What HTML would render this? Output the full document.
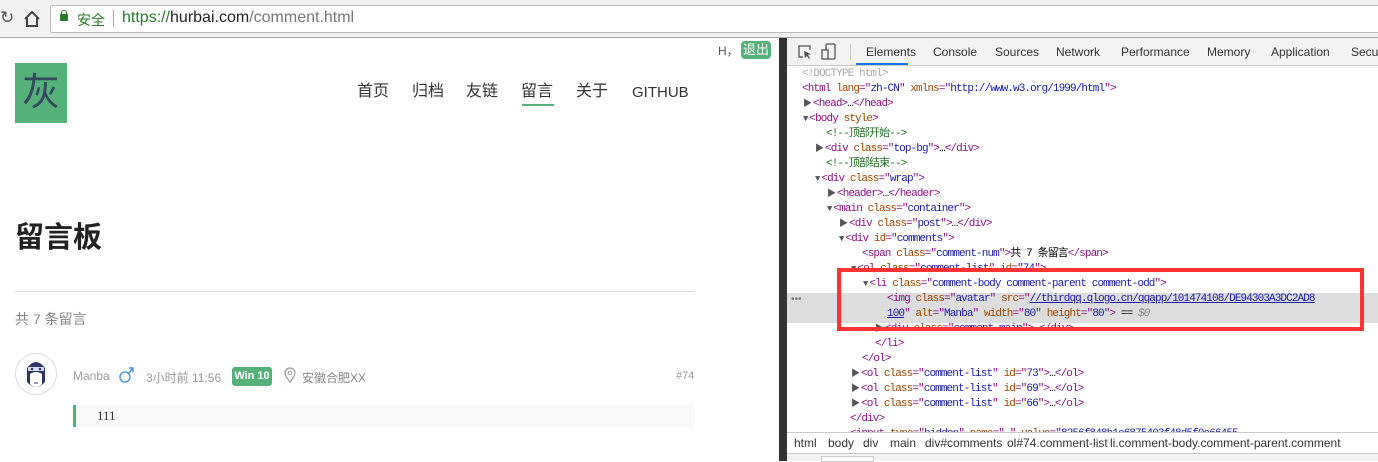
<!DOCTYPE html>
<html><head><meta charset="utf-8"><style>
*{margin:0;padding:0;box-sizing:border-box}
body{width:1378px;height:461px;overflow:hidden;background:#fff;font-family:"Liberation Sans","Noto Sans CJK SC",sans-serif;position:relative}
.abs{position:absolute;white-space:nowrap}
.t{color:#881280}.a{color:#994500}.v{color:#1a1aa6}.c{color:#236e25}.g{color:#aaa}
.code div{position:absolute;height:15px;line-height:15px;font-family:"Liberation Mono","Noto Sans CJK SC",monospace;font-size:11px;letter-spacing:-0.9px;white-space:nowrap}
.tri{font-size:9px;color:#555;letter-spacing:1px}
.nav{position:absolute;top:82px;font-size:16px;color:#333;line-height:20px;white-space:nowrap}
.bc{position:absolute;top:436px;font-size:12px;color:#333;white-space:nowrap}
</style></head><body>
<div class="abs" style="left:0;top:0;width:1378px;height:38px;background:#f2f2f2;border-bottom:1px solid #a9a9a9"></div>
<div class="abs" style="left:0;top:8px;font-size:17px;color:#555">&#x21bb;</div>
<svg class="abs" style="left:23px;top:10px" width="18" height="18" viewBox="0 0 18 18"><path d="M2 9 L9 2 L16 9 M4 8 V16 H14 V8" fill="none" stroke="#444" stroke-width="2"/></svg>
<div class="abs" style="left:50px;top:5px;width:1340px;height:28px;background:#fff;border:1px solid #bbb;border-radius:2px"></div>
<div class="abs" style="left:60px;top:14px;width:8px;height:7px;background:#2a7a2a;border-radius:1px"></div>
<div class="abs" style="left:61px;top:10px;width:6px;height:6px;border:1.5px solid #2a7a2a;border-bottom:none;border-radius:3px 3px 0 0"></div>
<div class="abs" style="left:77px;top:10px;font-size:14px;color:#2a7a2a">安全</div>
<div class="abs" style="left:113px;top:10px;width:1px;height:17px;background:#aaa"></div>
<div class="abs" style="left:122px;top:9px;font-size:16px;color:#777"><span style="color:#2a7a2a">https://</span><span style="color:#222">hurbai.com</span>/comment.html</div>
<div class="abs" style="left:718px;top:42px;font-size:12px;color:#555">H，</div>
<div class="abs" style="left:741px;top:41px;width:30px;height:18px;background:#55b07a;border-radius:4px;color:#fff;font-size:13px;text-align:center;line-height:18px">退出</div>
<div class="abs" style="left:15px;top:63px;width:52px;height:60px;background:#55b07a;color:#34495e;font-size:38px;text-align:center;line-height:60px">灰</div>
<div class="nav" style="left:357px">首页</div>
<div class="nav" style="left:412px">归档</div>
<div class="nav" style="left:466px">友链</div>
<div class="nav" style="left:521px">留言</div>
<div class="abs" style="left:522px;top:104px;width:32px;height:2px;background:#55b07a"></div>
<div class="nav" style="left:576px">关于</div>
<div class="nav" style="left:632px;font-size:15px;top:83px">GITHUB</div>
<div class="abs" style="left:15px;top:214px;font-size:29px;font-weight:bold;color:#222">留言板</div>
<div class="abs" style="left:15px;top:291px;width:680px;height:1px;background:#ddd"></div>
<div class="abs" style="left:15px;top:309px;font-size:14px;color:#888">共 7 条留言</div>
<div class="abs" style="left:15px;top:353px;width:42px;height:42px;border:1px solid #ddd;border-radius:50%;overflow:hidden;background:#fff">
<svg width="40" height="40" viewBox="0 0 40 40"><path d="M11 14 Q20 2 29 14 L29 28 Q20 38 11 28Z" fill="#2c3566"/><path d="M14 20 Q20 16 26 20 L26 30 Q20 36 14 30Z" fill="#fff"/><rect x="12" y="13" width="16" height="4" rx="1" fill="#dde"/><circle cx="16" cy="15" r="1.3" fill="#2c3566"/><circle cx="24" cy="15" r="1.3" fill="#2c3566"/><path d="M18 29 H22" stroke="#2c3566"/></svg></div>
<div class="abs" style="left:73px;top:369px;font-size:12px;color:#999">Manba</div>
<svg class="abs" style="left:119px;top:366px" width="16" height="18" viewBox="0 0 16 18"><circle cx="6" cy="11" r="5" fill="none" stroke="#5a9be8" stroke-width="1.6"/><path d="M9.5 7.5 L14 2 M10 2 H14 V6" fill="none" stroke="#5a9be8" stroke-width="1.6"/></svg>
<div class="abs" style="left:146px;top:369px;font-size:12px;color:#999">3小时前 11:56</div>
<div class="abs" style="left:232px;top:367px;width:40px;height:19px;background:#55b07a;border-radius:3px;color:#fff;font-size:11px;font-weight:bold;text-align:center;line-height:19px">Win 10</div>
<svg class="abs" style="left:284px;top:367px" width="12" height="16" viewBox="0 0 12 16"><path d="M6 15 C2 10 1 8 1 6 A5 5 0 0 1 11 6 C11 8 10 10 6 15Z" fill="none" stroke="#999" stroke-width="1.2"/><circle cx="6" cy="6" r="1.8" fill="none" stroke="#999"/></svg>
<div class="abs" style="left:302px;top:369px;font-size:12px;color:#888">安徽合肥XX</div>
<div class="abs" style="left:676px;top:370px;font-size:11px;color:#999">#74</div>
<div class="abs" style="left:73px;top:405px;width:622px;height:22px;background:#f9f9f9;border-left:3px solid #55b07a"></div>
<div class="abs" style="left:97px;top:408px;font-size:13px;color:#333;font-family:'Liberation Serif',serif">111</div>
<div class="abs" style="left:779px;top:38px;width:8px;height:423px;background:#333"></div>
<div class="abs" style="left:787px;top:38px;width:591px;height:28px;background:#f3f3f3;border-bottom:1px solid #ccc"></div>
<svg class="abs" style="left:797px;top:44px" width="16" height="16" viewBox="0 0 16 16"><path d="M6 13 H2 V2 H13 V6" fill="none" stroke="#555" stroke-width="1.3"/><path d="M7 7 L14 10 L11 11 L13 14 L12 15 L10 12 L8 14Z" fill="#555"/></svg>
<svg class="abs" style="left:821px;top:43px" width="16" height="18" viewBox="0 0 16 18"><rect x="5" y="1" width="9" height="15" rx="1" fill="none" stroke="#555" stroke-width="1.3"/><rect x="1" y="7" width="6" height="9" fill="#f3f3f3" stroke="#555" stroke-width="1.3"/></svg>
<div class="abs" style="left:850px;top:44px;width:1px;height:16px;background:#ccc"></div>
<div class="abs" style="left:856px;top:63px;width:52px;height:2px;background:#1a73e8"></div>
<div class="abs" style="top:45px;left:866px;font-size:12px;color:#333">Elements</div>
<div class="abs" style="top:45px;left:933px;font-size:12px;color:#333">Console</div>
<div class="abs" style="top:45px;left:995px;font-size:12px;color:#333">Sources</div>
<div class="abs" style="top:45px;left:1056px;font-size:12px;color:#333">Network</div>
<div class="abs" style="top:45px;left:1121px;font-size:12px;color:#333">Performance</div>
<div class="abs" style="top:45px;left:1207px;font-size:12px;color:#333">Memory</div>
<div class="abs" style="top:45px;left:1271px;font-size:12px;color:#333">Application</div>
<div class="abs" style="top:45px;left:1351px;font-size:12px;color:#333">Secu</div>
<div class="abs" style="left:787px;top:293px;width:591px;height:30px;background:#ddd"></div>
<div class="abs" style="left:791px;top:294px;font-size:10px;color:#777">•••</div>
<div class="code">
<div style="left:802px;top:67px" class="g">&lt;!DOCTYPE html&gt;</div>
<div style="left:802px;top:82px"><span class="t">&lt;html</span> <span class="a">lang</span><span class="t">="</span><span class="v">zh-CN</span><span class="t">"</span> <span class="a">xmlns</span><span class="t">="</span><span class="v">http://www.w3.org/1999/html</span><span class="t">"&gt;</span></div>
<div style="left:803px;top:97px"><span class="tri">▶</span><span class="t">&lt;head&gt;</span>…<span class="t">&lt;/head&gt;</span></div>
<div style="left:803px;top:112px"><span class="tri">▼</span><span class="t">&lt;body</span> <span class="a">style</span><span class="t">&gt;</span></div>
<div style="left:826px;top:127px" class="c">&lt;!--顶部开始--&gt;</div>
<div style="left:815px;top:142px"><span class="tri">▶</span><span class="t">&lt;div</span> <span class="a">class</span><span class="t">="</span><span class="v">top-bg</span><span class="t">"&gt;</span>…<span class="t">&lt;/div&gt;</span></div>
<div style="left:826px;top:157px" class="c">&lt;!--顶部结束--&gt;</div>
<div style="left:815px;top:172px"><span class="tri">▼</span><span class="t">&lt;div</span> <span class="a">class</span><span class="t">="</span><span class="v">wrap</span><span class="t">"&gt;</span></div>
<div style="left:827px;top:187px"><span class="tri">▶</span><span class="t">&lt;header&gt;</span>…<span class="t">&lt;/header&gt;</span></div>
<div style="left:827px;top:202px"><span class="tri">▼</span><span class="t">&lt;main</span> <span class="a">class</span><span class="t">="</span><span class="v">container</span><span class="t">"&gt;</span></div>
<div style="left:839px;top:217px"><span class="tri">▶</span><span class="t">&lt;div</span> <span class="a">class</span><span class="t">="</span><span class="v">post</span><span class="t">"&gt;</span>…<span class="t">&lt;/div&gt;</span></div>
<div style="left:839px;top:232px"><span class="tri">▼</span><span class="t">&lt;div</span> <span class="a">id</span><span class="t">="</span><span class="v">comments</span><span class="t">"&gt;</span></div>
<div style="left:862px;top:247px"><span class="t">&lt;span</span> <span class="a">class</span><span class="t">="</span><span class="v">comment-num</span><span class="t">"&gt;</span>共 7 条留言<span class="t">&lt;/span&gt;</span></div>
<div style="left:851px;top:262px"><span class="tri">▼</span><span class="t">&lt;ol</span> <span class="a">class</span><span class="t">="</span><span class="v">comment-list</span><span class="t">"</span> <span class="a">id</span><span class="t">="</span><span class="v">74</span><span class="t">"&gt;</span></div>
<div style="left:863px;top:277px"><span class="tri">▼</span><span class="t">&lt;li</span> <span class="a">class</span><span class="t">="</span><span class="v">comment-body comment-parent comment-odd</span><span class="t">"&gt;</span></div>
<div style="left:887px;top:292px"><span class="t">&lt;img</span> <span class="a">class</span><span class="t">="</span><span class="v">avatar</span><span class="t">"</span> <span class="a">src</span><span class="t">="</span><span class="v" style="text-decoration:underline">//thirdqq.qlogo.cn/qqapp/101474108/DE94303A3DC2AD8</span></div>
<div style="left:887px;top:307px"><span class="v" style="text-decoration:underline">100</span><span class="t">"</span> <span class="a">alt</span><span class="t">="</span><span class="v">Manba</span><span class="t">"</span> <span class="a">width</span><span class="t">="</span><span class="v">80</span><span class="t">"</span> <span class="a">height</span><span class="t">="</span><span class="v">80</span><span class="t">"&gt;</span> == <i style="color:#888">$0</i></div>
<div style="left:875px;top:322px"><span class="tri">▶</span><span class="t">&lt;div</span> <span class="a">class</span><span class="t">="</span><span class="v">comment-main</span><span class="t">"&gt;</span>…<span class="t">&lt;/div&gt;</span></div>
<div style="left:875px;top:337px" class="t">&lt;/li&gt;</div>
<div style="left:862px;top:352px" class="t">&lt;/ol&gt;</div>
<div style="left:851px;top:367px"><span class="tri">▶</span><span class="t">&lt;ol</span> <span class="a">class</span><span class="t">="</span><span class="v">comment-list</span><span class="t">"</span> <span class="a">id</span><span class="t">="</span><span class="v">73</span><span class="t">"&gt;</span>…<span class="t">&lt;/ol&gt;</span></div>
<div style="left:851px;top:382px"><span class="tri">▶</span><span class="t">&lt;ol</span> <span class="a">class</span><span class="t">="</span><span class="v">comment-list</span><span class="t">"</span> <span class="a">id</span><span class="t">="</span><span class="v">69</span><span class="t">"&gt;</span>…<span class="t">&lt;/ol&gt;</span></div>
<div style="left:851px;top:397px"><span class="tri">▶</span><span class="t">&lt;ol</span> <span class="a">class</span><span class="t">="</span><span class="v">comment-list</span><span class="t">"</span> <span class="a">id</span><span class="t">="</span><span class="v">66</span><span class="t">"&gt;</span>…<span class="t">&lt;/ol&gt;</span></div>
<div style="left:850px;top:412px" class="t">&lt;/div&gt;</div>
<div style="left:850px;top:427px"><span class="t">&lt;input</span> <span class="a">type</span><span class="t">="</span><span class="v">hidden</span><span class="t">"</span> <span class="a">name</span><span class="t">="</span><span class="v">_</span><span class="t">"</span> <span class="a">value</span><span class="t">="</span><span class="v">8256f848b1e6875403f48d5f0e66455</span></div>
</div>
<div class="abs" style="left:837px;top:268px;width:527px;height:63px;border:4px solid #f33"></div>
<div class="abs" style="left:787px;top:432px;width:591px;height:21px;background:#fff;border-top:1px solid #ccc"></div>
<div class="bc" style="left:794px">html</div>
<div class="bc" style="left:828px">body</div>
<div class="bc" style="left:863px">div</div>
<div class="bc" style="left:890px">main</div>
<div class="bc" style="left:925px">div#comments</div>
<div class="bc" style="left:1007px">ol#74.comment-list</div>
<div class="bc" style="left:1110px">li.comment-body.comment-parent.comment</div>
<div class="abs" style="left:787px;top:453px;width:591px;height:8px;background:#f3f3f3;border-top:1px solid #ccc"></div>
<div class="abs" style="left:821px;top:456px;width:53px;height:6px;background:#fff;border:1px solid #ccc"></div>
</body></html>
